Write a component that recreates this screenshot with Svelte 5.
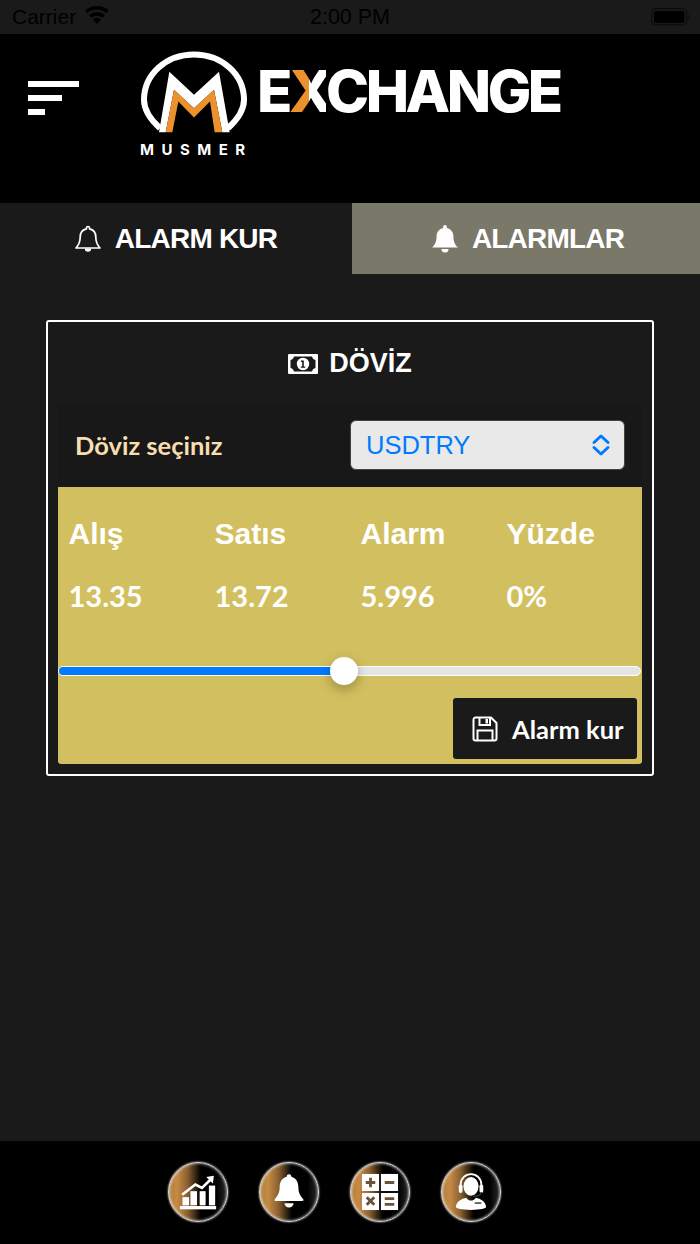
<script>
  const cols = [
    { label: 'Alış', value: '13.35' },
    { label: 'Satıs', value: '13.72' },
    { label: 'Alarm', value: '5.996' },
    { label: 'Yüzde', value: '0%' }
  ];
  const sliderPct = 49;
</script>

<div class="screen">
  <div class="status">
    <div class="st-left">
      <span>Carrier</span>
      <svg width="26" height="19" viewBox="0 0 26 19"><path d="M13 18l-4-4.600a6 6 0 0 1 8 0z M7.600 11.800 5 9a12 12 0 0 1 16 0l-2.600 2.800a8.500 8.500 0 0 0-10.800 0z M3.600 7.300 1 4.500a18 18 0 0 1 24 0l-2.600 2.800a14.500 14.500 0 0 0-19.800 0z" fill="#000"/></svg>
    </div>
    <span class="st-time">2:00 PM</span>
    <svg class="st-batt" width="40" height="18" viewBox="0 0 40 18"><rect x="0.700" y="0.700" width="35" height="16" rx="4" fill="none" stroke="#000" stroke-opacity="0.500" stroke-width="1.400"/><rect x="3" y="3" width="30.500" height="12" rx="2" fill="#000"/><path d="M37.500 6.500c1.300.4 1.800 1.400 1.800 2.500s-.5 2.100-1.800 2.500z" fill="#000" fill-opacity="0.500"/></svg>
  </div>

  <header class="top">
    <svg class="menu" width="52" height="34" viewBox="0 0 52 34"><rect x="0" y="0" width="51" height="6" fill="#fff"/><rect x="0" y="14" width="34" height="6" fill="#fff"/><rect x="0" y="28" width="17" height="6" fill="#fff"/></svg>
    <div class="logo">
      <div class="mark">
        <svg width="110" height="83" viewBox="28 16 330 248">
          <path d="M88 250C60 225 40 195 40 165 40 90 105 29 190 29 275 29 340 90 340 165 340 195 320 225 292 250" fill="none" stroke="#fff" stroke-width="18"/>
          <path d="M85 262 116 81 190 150 265 81 297 262H275L250 135 190 190 130 135 105 262Z" fill="#fff"/>
          <path d="M105 262 130 135 190 190 250 135 275 262H252L238 170 190 218 143 170 125 262Z" fill="#ec922c"/>
        </svg>
        <span class="musmer">MUSMER</span>
      </div>
      <div class="wordmark">E<span class="x">X</span>CHANGE</div>
    </div>
  </header>

  <nav class="tabs">
    <div class="tab">
      <svg width="26" height="29" viewBox="0 0 26 29"><path d="M13 2.500c.9 0 1.500.6 1.500 1.500v.8c4 .8 6.300 4.200 6.300 8.200 0 5 1 7.600 4.200 11H1c3.200-3.400 4.200-6 4.200-11 0-4 2.300-7.400 6.300-8.200V4c0-.9.600-1.500 1.500-1.500z" fill="none" stroke="#fff" stroke-width="1.700" stroke-linejoin="round"/><path d="M9.800 24.500a3.200 3.200 0 0 0 6.400 0z" fill="#fff"/></svg>
      <span>ALARM KUR</span>
    </div>
    <div class="tab alt">
      <svg width="26" height="29" viewBox="0 0 26 29"><path d="M13 1c1 0 1.800.8 1.800 1.800v1.100c4.100.8 6.600 4.200 6.600 8.300 0 5 1.200 7.600 4.400 11.300H.2c3.200-3.700 4.400-6.300 4.400-11.300 0-4.100 2.500-7.500 6.600-8.300V2.800C11.200 1.800 12 1 13 1z" fill="#fff"/><path d="M9.500 25a3.500 3.500 0 0 0 7 0z" fill="#fff"/></svg>
      <span>ALARMLAR</span>
    </div>
  </nav>

  <main class="content">
    <section class="card">
      <h2 class="title">
        <svg width="30" height="20" viewBox="0 0 30 20"><rect width="30" height="20" rx="1" fill="#fff"/><path d="M6 2.500h18c.5 2 1.500 3 3.500 3.500v8c-2 .5-3 1.500-3.500 3.500H6c-.5-2-1.500-3-3.500-3.500V6C4.500 5.500 5.500 4.500 6 2.500z" fill="#1a1a1a"/><circle cx="15" cy="10" r="6.200" fill="#fff"/><path d="M13 6.500h2.800V12.500h1.400v1.300h-4.400v-1.300h1.400V8H13z" fill="#1a1a1a"/></svg>
        <span>DÖVİZ</span>
      </h2>

      <div class="select-row">
        <span class="select-label">Döviz seçiniz</span>
        <div class="select">
          <span>USDTRY</span>
          <svg width="20" height="24" viewBox="0 0 20 24"><path d="M3 9.500 10 3l7 6.500M3 14.500l7 6.500 7-6.500" fill="none" stroke="#007aff" stroke-width="3" stroke-linecap="round" stroke-linejoin="round"/></svg>
        </div>
      </div>

      <div class="panel">
        <div class="cols">
          {#each cols as c}
            <div class="col">
              <div class="lbl">{c.label}</div>
              <div class="val">{c.value}</div>
            </div>
          {/each}
        </div>

        <div class="slider">
          <div class="fill" style="width: {sliderPct}%"></div>
          <div class="thumb"></div>
        </div>

        <div class="actions">
          <button class="save">
            <svg width="26" height="26" viewBox="0 0 26 26"><path d="M3.500 1.500H19l5.500 5.500v15.500a2 2 0 0 1-2 2h-19a2 2 0 0 1-2-2v-19a2 2 0 0 1 2-2z" fill="none" stroke="#fff" stroke-width="2"/><path d="M7.500 2v7h10.500V2" fill="none" stroke="#fff" stroke-width="2"/><rect x="13.500" y="3" width="2.500" height="4.500" fill="#fff"/><path d="M5.500 24V14.500h15V24" fill="none" stroke="#fff" stroke-width="2"/></svg>
            <span>Alarm kur</span>
          </button>
        </div>
      </div>
    </section>
  </main>

  <footer class="bottom">
    <div class="fab">
      <svg width="38" height="35" viewBox="56 58 114 106"><g fill="#fff"><rect x="66" y="125" width="20" height="25"/><rect x="90" y="107" width="20" height="43"/><rect x="118" y="107" width="18" height="43"/><rect x="146" y="90" width="19" height="60"/><rect x="58" y="152" width="110" height="10"/><path d="M138 64 161 60 158 84Z"/></g><path d="M65 118 105 87 125 97 152 71" fill="none" stroke="#fff" stroke-width="8"/></svg>
    </div>
    <div class="fab">
      <svg width="30" height="39" viewBox="0 0 32 40"><circle cx="16" cy="3" r="2.500" fill="#fff"/><path d="M16 3c7 0 10 5.500 10 11.500 0 6 2 9 5 12.500 1 1.300.5 2-1 2H2c-1.500 0-2-.7-1-2 3-3.500 5-6.500 5-12.500C6 8.500 9 3 16 3z" fill="#fff"/><path d="M11 31.500h10c-.5 3-2.500 4.500-5 4.500s-4.500-1.500-5-4.500z" fill="#fff"/></svg>
    </div>
    <div class="fab">
      <svg width="38" height="38" viewBox="0 0 40 40"><rect x="1" y="1" width="18" height="18" fill="#fff"/><rect x="21" y="1" width="18" height="18" fill="#fff"/><rect x="1" y="21" width="18" height="18" fill="#fff"/><rect x="21" y="21" width="18" height="18" fill="#fff"/><path d="M5 10h10M10 5v10M25 10h10M6 25.500l8 8M14 25.500l-8 8M25 27h10M25 33h10" stroke="#6b5238" stroke-width="3" fill="none"/></svg>
    </div>
    <div class="fab">
      <svg width="32" height="38" viewBox="0 0 34 40"><path d="M6 16v-4a11 11 0 0 1 22 0v4" fill="none" stroke="#fff" stroke-width="2"/><ellipse cx="17" cy="14" rx="8" ry="10" fill="#fff"/><rect x="4" y="12" width="4" height="9" rx="2" fill="#fff"/><rect x="26" y="12" width="4" height="9" rx="2" fill="#fff"/><path d="M28 20c0 3-4 4.500-9 4.500" fill="none" stroke="#333" stroke-width="1.500"/><path d="M1 36c0-6 6-9 11-10 1 2 3 3 5 3s4-1 5-3c5 1 11 4 11 10 0 1.500-6 3-16 3S1 37.500 1 36z" fill="#fff"/><rect x="21" y="31" width="7" height="1.500" fill="#333"/></svg>
    </div>
  </footer>
</div>

<style>
  :global(body) { margin: 0; background: #1a1a1a; }
  .screen {
    width: 700px; height: 1244px; display: flex; flex-direction: column;
    background: #1a1a1a; font-family: "Liberation Sans", Arial, sans-serif; overflow: hidden;
  }
  .status {
    height: 34px; flex: none; display: flex; align-items: center; justify-content: space-between;
    padding: 0 9px 0 12px; color: #000; font-size: 21px; position: relative; background: #1a1a1a;
  }
  .st-left { display: flex; align-items: center; gap: 8px; }
  .st-left svg { margin-top: -3px; }
  .st-time { position: absolute; left: 0; right: 0; text-align: center; font-size: 21.500px; }

  .top {
    height: 169px; flex: none; background: #000; display: flex; align-items: flex-start;
    padding: 47px 0 0 28px; box-sizing: border-box;
  }
  .menu { flex: none; }
  .logo { display: flex; align-items: flex-start; margin: -31px 0 0 60px; }
  .mark { width: 110px; display: flex; flex-direction: column; }
  .mark svg { display: block; }
  .musmer {
    color: #fff; font-family: Inter, sans-serif; font-weight: 700; font-size: 15px;
    letter-spacing: 7.500px; line-height: 18px; margin-top: 8px; white-space: nowrap;
  }
  .wordmark {
    color: #fff; font-family: Inter, sans-serif; font-weight: 800; font-size: 58px; line-height: 58px;
    letter-spacing: -3.500px; margin: 12px 0 0 7px; white-space: nowrap;
  }
  .x {
    background: linear-gradient(90deg, #ec922c 0 55%, #fff 55% 100%);
    -webkit-background-clip: text; background-clip: text; color: transparent;
  }

  .tabs { display: grid; grid-template-columns: 352px 348px; height: 71px; flex: none; }
  .tab {
    display: flex; align-items: center; justify-content: center; gap: 14px; color: #fff;
    font-weight: 700; font-size: 28px; letter-spacing: -0.800px; background: #1a1a1a;
  }
  .tab.alt { background: #7a7868; padding-left: 4px; }

  .content { flex: 1; padding: 46px 46px 0; box-sizing: border-box; }
  .card {
    border: 2px solid #fff; border-radius: 3px; padding: 0 10px 10px; height: 456px; box-sizing: border-box;
    display: flex; flex-direction: column;
  }
  .title {
    margin: 0; height: 83px; flex: none; display: flex; align-items: center; justify-content: center; gap: 11px;
    color: #fff; font-size: 27px; font-weight: 700;
  }
  .select-row {
    height: 82px; flex: none; display: flex; align-items: center; justify-content: space-between;
    padding: 0 17px 2px; background: #181818; box-sizing: border-box;
  }
  .select-label { color: #f7deb0; font-family: Lato, sans-serif; font-weight: 700; font-size: 25.500px; }
  .select {
    width: 275px; height: 50px; box-sizing: border-box; background: #e9e9e9; border: 1px solid #444; border-radius: 6px;
    display: flex; align-items: center; justify-content: space-between; padding: 0 13px 0 15px;
    color: #007aff; font-size: 25.500px;
  }
  .panel { flex: 1; background: #d2bf5f; border-radius: 0 0 3px 3px; display: flex; flex-direction: column; }
  .cols { display: grid; grid-template-columns: repeat(4, 1fr); height: 150px; flex: none; padding-top: 30px; box-sizing: border-box; }
  .col { padding-left: 10.500px; color: #fff; }
  .lbl { font-weight: 700; font-size: 30px; line-height: 34px; }
  .val { font-family: Lato, sans-serif; font-weight: 700; font-size: 29px; line-height: 34px; margin-top: 28px; }
  .slider {
    height: 10px; margin: 29px 1px 0 0; flex: none; background: #e5e5e5; border: 1.500px solid #fff; border-radius: 6px;
    box-sizing: border-box; position: relative;
  }
  .fill { height: 100%; background: #007aff; border-radius: 5px 0 0 5px; }
  .thumb {
    position: absolute; left: calc(49% - 14px); top: -10px; width: 28px; height: 28px; border-radius: 50%;
    background: #fff; box-shadow: 0 4px 12px rgba(0,0,0,.28);
  }
  .actions { display: flex; justify-content: flex-end; padding: 22px 5px 0 0; }
  .save {
    width: 184px; height: 61px; background: #1a1a1a; border: 0; border-radius: 3px; color: #fff;
    display: flex; align-items: center; gap: 14px; padding: 0 0 0 19px; box-sizing: border-box;
    font-family: Lato, sans-serif; font-weight: 700; font-size: 25.500px; white-space: nowrap;
  }

  .bottom {
    height: 103px; flex: none; background: #000; display: flex; justify-content: center; align-items: flex-start;
    gap: 31px; padding: 21px 31px 0 0; box-sizing: border-box;
  }
  .fab {
    width: 60px; height: 60px; box-sizing: border-box; border: 1px solid #d8d8d8; border-radius: 50%;
    background: linear-gradient(90deg, #b5803f 0%, #c58a45 14%, #8a6030 32%, #000 55%, #000 82%, #2a2a2a 100%);
    box-shadow: 0 0 2px #fff, inset 0 0 3px #fff;
    display: flex; align-items: center; justify-content: center;
  }
</style>
